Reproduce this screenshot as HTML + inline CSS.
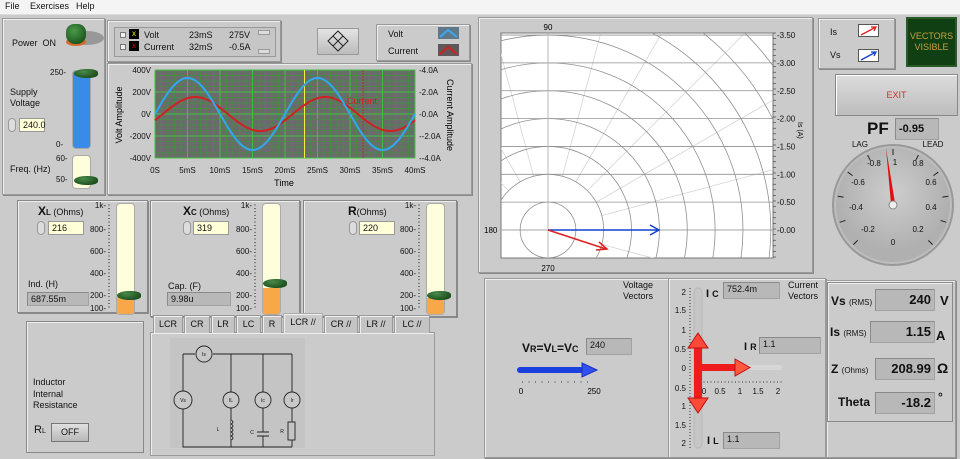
<!DOCTYPE html>
<html><head><meta charset="utf-8"><style>
*{box-sizing:border-box;margin:0;padding:0}
html,body{width:960px;height:459px;overflow:hidden}
body{background:#cbcbcb;font-family:"Liberation Sans",sans-serif;font-size:9px;color:#111;position:relative}
.a{position:absolute}
.menu{left:0;top:0;width:960px;height:15px;background:#f4f4f4;border-bottom:1px solid #ddd;font-size:9px}
.menu span{position:absolute;top:1px}
.pan{position:absolute;border:1px solid #9a9a9a;box-shadow:inset 1px 1px 0 #eee,1px 1px 0 #8a8a8a;background:#cbcbcb}
.box{position:absolute;background:#b8b8b8;border:1px solid #a2a2a2;border-top-color:#8a8a8a;border-left-color:#8a8a8a;padding:1px 3px;font-size:8px}
.inp{position:absolute;background:#ffffd8;border:1px solid #999;font-size:9px;padding:1px 3px;height:14px}
.spin{position:absolute;width:8px;height:14px;border-radius:4px;background:#ddd;border:1px solid #999}
.trk{position:absolute;border-radius:4px;background:#fefedc;border:1px solid #aaa;overflow:hidden}
.knob{position:absolute;width:24px;height:9px;border-radius:50% 40% 40% 50%;background:radial-gradient(ellipse at 40% 30%,#4a8a4a,#0c3a0c);}
.tab{position:absolute;top:315px;height:18px;background:#c4c4c4;border:1px solid #999;border-bottom:none;font-size:9px;text-align:center;line-height:16px;box-shadow:inset 1px 1px 0 #eee}
.b{font-weight:bold}
</style></head><body>
<div class="a menu"><span style="left:5px">File</span><span style="left:30px">Exercises</span><span style="left:76px">Help</span></div>

<div class="pan" style="left:2px;top:18px;width:103px;height:177px"></div>
<div class="a" style="left:12px;top:38px;font-size:9px">Power&nbsp; ON</div>
<div class="a" style="left:68px;top:31px;width:36px;height:14px;border-radius:50%;background:#777;opacity:.6"></div>
<div class="a" style="left:66px;top:38px;width:20px;height:8px;border-radius:50%;background:#d86a2a"></div>
<div class="a" style="left:66px;top:24px;width:20px;height:20px;border-radius:40% 40% 45% 45%;background:radial-gradient(circle at 40% 35%,#4a9a4a,#0d4010)"></div>
<div class="a" style="left:10px;top:87px;font-size:9px;line-height:11px">Supply<br>Voltage</div>
<div class="spin" style="left:8px;top:118px"></div>
<div class="inp" style="left:19px;top:118px;width:26px">240.0</div>
<div class="a" style="left:50px;top:68px;font-size:8px">250-</div>
<div class="a" style="left:56px;top:140px;font-size:8px">0-</div>
<div class="trk" style="left:72px;top:70px;width:19px;height:79px;background:#3a8ae8"></div>
<div class="knob" style="left:74px;top:69px"></div>
<div class="a" style="left:56px;top:154px;font-size:8px">60-</div>
<div class="a" style="left:56px;top:175px;font-size:8px">50-</div>
<div class="a" style="left:10px;top:164px;font-size:9px">Freq. (Hz)</div>
<div class="trk" style="left:72px;top:155px;width:19px;height:34px"></div>
<div class="knob" style="left:74px;top:176px"></div>

<div class="pan" style="left:107px;top:20px;width:174px;height:42px"></div>
<div class="a" style="left:114px;top:27px;width:162px;height:30px;border:1px solid #999;background:#c6c6c6"></div>
<div class="a" style="left:120px;top:32px;width:6px;height:6px;border:1px solid #777;background:#eee"></div>
<div class="a" style="left:120px;top:44px;width:6px;height:6px;border:1px solid #777;background:#eee"></div>
<div class="a" style="left:129px;top:29px;width:10px;height:10px;background:#000;color:#ee0;font-size:8px;text-align:center;line-height:10px">x</div>
<div class="a" style="left:129px;top:41px;width:10px;height:10px;background:#000;color:#d00;font-size:8px;text-align:center;line-height:10px">x</div>
<div class="a" style="left:144px;top:30px">Volt</div><div class="a" style="left:189px;top:30px">23mS</div><div class="a" style="left:229px;top:30px">275V</div>
<div class="a" style="left:144px;top:42px">Current</div><div class="a" style="left:189px;top:42px">32mS</div><div class="a" style="left:229px;top:42px">-0.5A</div>
<div class="a" style="left:258px;top:30px;width:12px;height:5px;background:#ddd;border:1px solid #999"></div>
<div class="a" style="left:258px;top:49px;width:12px;height:5px;background:#ddd;border:1px solid #999"></div>

<div class="a" style="left:317px;top:28px;width:42px;height:27px;background:linear-gradient(#e4e4e4,#bcbcbc);border:1px solid #999"></div>
<svg class="a" style="left:326px;top:29px" width="24" height="24"><g fill="none" stroke="#222"><path d="M12 2 L22 12 L12 22 L2 12Z"/><path d="M7 7 L17 17 M17 7 L7 17"/></g></svg>

<div class="pan" style="left:376px;top:24px;width:94px;height:37px"></div>
<div class="a" style="left:388px;top:29px">Volt</div><div class="a" style="left:388px;top:46px">Current</div>
<svg class="a" style="left:438px;top:27px" width="22" height="30"><rect x="0" y="0" width="21" height="12" fill="#607888"/><path d="M2 10 L10 3 L19 10" stroke="#3aa8f0" stroke-width="2" fill="none"/><rect x="0" y="17" width="21" height="12" fill="#605858"/><path d="M2 27 L10 20 L19 27" stroke="#d02020" stroke-width="2" fill="none"/></svg>

<div class="pan" style="left:107px;top:63px;width:365px;height:132px"></div>
<svg class="a" style="left:107px;top:63px" width="365" height="132">
<rect x="48" y="7" width="260" height="88" fill="#6b6b6b"/>
<g id="grid"></g>
<line x1="197.5" y1="7" x2="197.5" y2="95" stroke="#f0f040"/>
<line x1="256" y1="7" x2="256" y2="95" stroke="#b03030" stroke-dasharray="2,1"/>
<path id="iw" fill="none" stroke="#d02020" stroke-width="2"/>
<path id="vw" fill="none" stroke="#30a8f0" stroke-width="2"/>
<text x="240" y="41" fill="#d02020" font-size="9">Current</text>
<g font-size="8" fill="#111" text-anchor="end"><text x="44" y="10">400V</text><text x="44" y="32">200V</text><text x="44" y="54">0V</text><text x="44" y="76">-200V</text><text x="44" y="98">-400V</text></g>
<g font-size="8" fill="#111"><text x="312" y="10">-4.0A</text><text x="312" y="32">-2.0A</text><text x="312" y="54">-0.0A</text><text x="312" y="76">--2.0A</text><text x="312" y="98">--4.0A</text></g>
<g font-size="8" fill="#111" text-anchor="middle" id="xl"></g>
<text x="177" y="123" font-size="9" text-anchor="middle">Time</text>
<text transform="translate(15,52) rotate(-90)" font-size="9" text-anchor="middle">Volt Amplitude</text>
<text transform="translate(340,52) rotate(90)" font-size="9" text-anchor="middle">Current Amplitude</text>
</svg>

<div class="pan" style="left:478px;top:17px;width:335px;height:256px"></div>
<svg class="a" style="left:478px;top:17px" width="335" height="256">
<defs><clipPath id="pc"><rect x="23" y="16" width="272" height="225"/></clipPath></defs>
<rect x="23" y="16" width="272" height="225" fill="#fff" stroke="#777"/>
<g clip-path="url(#pc)" fill="none" stroke="#a0a0a0" stroke-width="0.8" id="polar"></g>
<line x1="70" y1="213" x2="180" y2="213" stroke="#1040d0" stroke-width="1.5"/>
<path d="M172 208 L181 213 L172 218" stroke="#1040d0" stroke-width="1.5" fill="none"/>
<line x1="70" y1="213" x2="128" y2="232" stroke="#e02020" stroke-width="1.5"/>
<path d="M118 233 L129 232 L121 225" stroke="#e02020" stroke-width="1.5" fill="none"/>
<g font-size="8" fill="#111" id="pl"></g>
<text x="70" y="13" font-size="8" text-anchor="middle">90</text>
<text x="70" y="254" font-size="8" text-anchor="middle">270</text>
<text x="6" y="216" font-size="8">180</text>
<text transform="translate(320,105) rotate(90)" font-size="7">Is (A)</text>
</svg>

<div class="pan" style="left:818px;top:18px;width:77px;height:51px"></div>
<div class="a" style="left:830px;top:27px">Is</div><div class="a" style="left:830px;top:50px">Vs</div>
<svg class="a" style="left:858px;top:24px" width="22" height="40"><rect x="0.5" y="0.5" width="20" height="12" fill="#fff" stroke="#555"/><path d="M3 11 L18 3 M13 3 L18 3 L16 7" stroke="#e02020" stroke-width="1.3" fill="none"/><rect x="0.5" y="25.5" width="20" height="12" fill="#fff" stroke="#555"/><path d="M3 36 L18 28 M13 28 L18 28 L16 32" stroke="#1040d0" stroke-width="1.3" fill="none"/></svg>
<div class="a" style="left:906px;top:17px;width:51px;height:50px;background:#0f3f12;border:2px solid #2a5a2a;color:#c8a040;font-size:9px;text-align:center;padding-top:12px;line-height:11px">VECTORS<br>VISIBLE</div>
<div class="a" style="left:835px;top:74px;width:123px;height:42px;background:linear-gradient(#dcdcdc,#bdbdbd);border:1px solid #888;box-shadow:inset 1px 1px 0 #fff;color:#d03030;text-align:center;line-height:40px;font-size:9px">EXIT</div>
<div class="a b" style="left:867px;top:119px;font-size:17px">PF</div>
<div class="box" style="left:895px;top:118px;width:44px;height:22px;font-size:11px;font-weight:bold;line-height:18px">-0.95</div>
<svg class="a" style="left:828px;top:140px" width="130" height="128">
<defs><radialGradient id="gg" cx="50%" cy="40%"><stop offset="0" stop-color="#cdcdcd"/><stop offset="1" stop-color="#b0b0b0"/></radialGradient></defs>
<circle cx="65" cy="65" r="60" fill="#bdbdbd" stroke="#999" stroke-width="2"/>
<circle cx="65" cy="65" r="57" fill="url(#gg)"/>
<g stroke="#222" stroke-width="1" id="tk"></g>
<g font-size="8" fill="#111" text-anchor="middle"><text x="67" y="25">1</text><text x="46" y="26">-0.8</text><text x="90" y="26">0.8</text><text x="30" y="45">-0.6</text><text x="103" y="45">0.6</text><text x="28" y="70">-0.4</text><text x="103" y="70">0.4</text><text x="40" y="92">-0.2</text><text x="90" y="92">0.2</text><text x="65" y="105">0</text><text x="32" y="7">LAG</text><text x="105" y="7">LEAD</text></g>
<path d="M58 8 L67 63 L63 64 Z" fill="#e01010"/>
<circle cx="65" cy="65" r="4" fill="#eee" stroke="#888"/>
</svg>

<div class="pan" style="left:17px;top:200px;width:131px;height:113px;border-color:#888"></div>
<div class="pan" style="left:150px;top:200px;width:150px;height:117px;border-color:#888"></div>
<div class="pan" style="left:303px;top:200px;width:154px;height:117px;border-color:#888"></div>
<div class="a" style="left:38px;top:204px;font-size:9px"><b style="font-size:12px">X</b><b style="font-size:8px">L</b> (Ohms)</div>
<div class="spin" style="left:37px;top:221px"></div><div class="inp" style="left:48px;top:221px;width:36px">216</div>
<div class="a" style="left:28px;top:279px">Ind. (H)</div>
<div class="box" style="left:27px;top:292px;width:62px;height:14px;font-size:9px">687.55m</div>
<div class="a" style="left:183px;top:204px;font-size:9px"><b style="font-size:12px">X</b><b style="font-size:8px">C</b> (Ohms)</div>
<div class="spin" style="left:183px;top:221px"></div><div class="inp" style="left:193px;top:221px;width:36px">319</div>
<div class="a" style="left:168px;top:281px">Cap. (F)</div>
<div class="box" style="left:167px;top:292px;width:64px;height:14px;font-size:9px">9.98u</div>
<div class="a" style="left:348px;top:204px;font-size:9px"><b style="font-size:12px">R</b>(Ohms)</div>
<div class="spin" style="left:349px;top:221px"></div><div class="inp" style="left:359px;top:221px;width:36px">220</div>
<svg class="a" style="left:0;top:195px" width="480" height="125"><g font-size="8" fill="#111" text-anchor="end" id="sc"></g></svg>
<div class="trk" style="left:116px;top:203px;width:19px;height:112px"><div style="position:absolute;left:0;bottom:0;width:19px;height:17px;background:#f8a848"></div></div>
<div class="knob" style="left:117px;top:291px"></div>
<div class="trk" style="left:262px;top:203px;width:19px;height:112px"><div style="position:absolute;left:0;bottom:0;width:19px;height:26px;background:#f8a848"></div></div>
<div class="knob" style="left:263px;top:279px"></div>
<div class="trk" style="left:426px;top:203px;width:19px;height:112px"><div style="position:absolute;left:0;bottom:0;width:19px;height:16px;background:#f8a848"></div></div>
<div class="knob" style="left:427px;top:291px"></div>

<div class="a" style="left:26px;top:321px;width:118px;height:132px;border:1px solid #888;box-shadow:inset 1px 1px 0 #eee"></div>
<div class="a" style="left:33px;top:377px;line-height:11.5px">Inductor<br>Internal<br>Resistance</div>
<div class="a" style="left:34px;top:424px;font-size:11px">R<span style="font-size:7px">L</span></div>
<div class="a" style="left:51px;top:423px;width:38px;height:19px;background:linear-gradient(#e0e0e0,#b8b8b8);border:1px solid #777;text-align:center;line-height:17px">OFF</div>

<div class="a" style="left:150px;top:332px;width:285px;height:124px;border:1px solid #999;background:#cbcbcb;box-shadow:inset 1px 1px 0 #eee"></div>
<div class="tab" style="left:153px;width:30px">LCR</div>
<div class="tab" style="left:184px;width:26px">CR</div>
<div class="tab" style="left:211px;width:24px">LR</div>
<div class="tab" style="left:236px;width:25px">LC</div>
<div class="tab" style="left:262px;width:20px">R</div>
<div class="tab" style="left:283px;width:40px;top:313px;height:20px;background:#cbcbcb;border-color:#aaa">LCR //</div>
<div class="tab" style="left:324px;width:34px">CR //</div>
<div class="tab" style="left:359px;width:34px">LR //</div>
<div class="tab" style="left:394px;width:36px">LC //</div>
<svg class="a" style="left:170px;top:338px" width="135" height="110"><rect x="0" y="0" width="135" height="110" fill="#c4c4c4"/>
<g stroke="#222" fill="#c8c8c8" stroke-width="0.9">
<path d="M13 16 L25 16 M43 16 L122 16 M13 16 L13 109 L122 109 M61 16 L61 109 M93 16 L93 109 M122 16 L122 109" fill="none"/>
<circle cx="34" cy="16" r="8"/><circle cx="13" cy="62" r="9"/><circle cx="61" cy="62" r="8"/><circle cx="93" cy="62" r="8"/><circle cx="122" cy="62" r="8"/>
<path d="M61 82 q4 2 0 4 q4 2 0 4 q4 2 0 4 q4 2 0 4 q4 2 0 4" fill="#c4c4c4"/>
<path d="M87 94 L99 94 M87 98 L99 98" fill="none"/><rect x="91" y="94.5" width="4" height="3" stroke="none" fill="#c4c4c4"/>
<rect x="118" y="84" width="7" height="18" fill="#c4c4c4"/>
</g>
<g font-size="5" text-anchor="middle" fill="#111"><text x="34" y="18">Is</text><text x="13" y="64">Vs</text><text x="61" y="64">IL</text><text x="93" y="64">Ic</text><text x="122" y="64">Ir</text><text x="48" y="93">L</text><text x="82" y="96">C</text><text x="112" y="95">R</text></g>
</svg>

<div class="pan" style="left:484px;top:278px;width:186px;height:180px"></div>
<div class="pan" style="left:668px;top:278px;width:158px;height:180px"></div>
<div class="pan" style="left:826px;top:280px;width:130px;height:178px"></div>
<div class="a" style="left:623px;top:280px;text-align:right;line-height:11px">Voltage<br>Vectors</div>
<div class="a b" style="left:522px;top:341px;font-size:12px">V<span style="font-size:9px">R</span>=V<span style="font-size:9px">L</span>=V<span style="font-size:9px">C</span></div>
<div class="box" style="left:586px;top:338px;width:46px;height:17px;font-size:9px">240</div>
<svg class="a" style="left:515px;top:360px" width="90" height="35"><path d="M5 10 L67 10" stroke="#1a40e0" stroke-width="6" stroke-linecap="round"/><path d="M67 3 L82 10 L67 17 Z" fill="#3050f0" stroke="#1a30c0"/><path d="M7 22 H78" stroke="#333" stroke-dasharray="1,5.5"/><text x="6" y="34" font-size="8" text-anchor="middle">0</text><text x="79" y="34" font-size="8" text-anchor="middle">250</text></svg>

<div class="a" style="left:788px;top:280px;text-align:right;line-height:11px">Current<br>Vectors</div>
<svg class="a" style="left:670px;top:283px" width="140" height="170">
<rect x="24" y="5" width="8" height="160" rx="4" fill="#c6c6c6" stroke="#b8b8b8"/>
<rect x="28" y="82" width="84" height="5" rx="2" fill="#d6d6d6"/>
<g font-size="8" fill="#111" text-anchor="end"><text x="16" y="12">2</text><text x="16" y="30">1.5</text><text x="16" y="50">1</text><text x="16" y="69">0.5</text><text x="16" y="88">0</text><text x="16" y="108">0.5</text><text x="16" y="126">1</text><text x="16" y="145">1.5</text><text x="16" y="163">2</text></g>
<path d="M20 5 V165" stroke="#333" stroke-dasharray="1,2"/>
<path d="M30 99 H112" stroke="#333" stroke-dasharray="1,2.5"/>
<g font-size="8" fill="#111" text-anchor="middle"><text x="34" y="111">0</text><text x="50" y="111">0.5</text><text x="70" y="111">1</text><text x="88" y="111">1.5</text><text x="108" y="111">2</text></g>
<rect x="24" y="60" width="8" height="62" fill="#ee1c1c"/>
<path d="M18 65 L28 50 L38 65 Z M18 115 L28 130 L38 115 Z" fill="#ff4a3a" stroke="#c01010"/>
<rect x="28" y="81" width="38" height="7" fill="#ee1c1c"/>
<path d="M65 76 L80 84.5 L65 93 Z" fill="#ff5a40" stroke="#c01010"/>
</svg>
<div class="a b" style="left:706px;top:288px;font-size:11px">I <span style="font-size:9px">C</span></div>
<div class="box" style="left:723px;top:282px;width:57px;height:17px;font-size:9px">752.4m</div>
<div class="a b" style="left:744px;top:341px;font-size:11px">I <span style="font-size:9px">R</span></div>
<div class="box" style="left:759px;top:337px;width:62px;height:17px;font-size:9px">1.1</div>
<div class="a b" style="left:707px;top:435px;font-size:11px">I <span style="font-size:9px">L</span></div>
<div class="box" style="left:723px;top:432px;width:57px;height:17px;font-size:9px">1.1</div>

<div class="a" style="left:827px;top:282px;width:126px;height:140px;border:1px solid #888;box-shadow:inset 1px 1px 0 #eee"></div>
<div class="a b" style="left:831px;top:294px;font-size:12px">Vs <span style="font-weight:normal;font-size:8px">(RMS)</span></div>
<div class="box" style="left:875px;top:289px;width:60px;height:22px;font-size:13px;font-weight:bold;text-align:right;line-height:18px">240</div>
<div class="a b" style="left:940px;top:293px;font-size:13px">V</div>
<div class="a b" style="left:830px;top:325px;font-size:12px">Is <span style="font-weight:normal;font-size:8px">(RMS)</span></div>
<div class="box" style="left:870px;top:321px;width:65px;height:22px;font-size:13px;font-weight:bold;text-align:right;line-height:18px">1.15</div>
<div class="a b" style="left:936px;top:328px;font-size:13px">A</div>
<div class="a b" style="left:831px;top:362px;font-size:12px">Z <span style="font-weight:normal;font-size:8px">(Ohms)</span></div>
<div class="box" style="left:875px;top:358px;width:60px;height:22px;font-size:13px;font-weight:bold;text-align:right;line-height:18px">208.99</div>
<div class="a b" style="left:937px;top:360px;font-size:14px">Ω</div>
<div class="a b" style="left:838px;top:395px;font-size:12px">Theta</div>
<div class="box" style="left:875px;top:392px;width:60px;height:22px;font-size:13px;font-weight:bold;text-align:right;line-height:18px">-18.2</div>
<div class="a b" style="left:938px;top:390px;font-size:12px">°</div>

<script>
var NS="http://www.w3.org/2000/svg";
function el(p,t,a,tx){var e=document.createElementNS(NS,t);for(var k in a)e.setAttribute(k,a[k]);if(tx)e.textContent=tx;p.appendChild(e);return e;}
var g=document.getElementById("grid");
for(var i=0;i<=40;i++){var x=48+i*6.5;el(g,"line",{x1:x,y1:7,x2:x,y2:95,stroke:i%5==0?"#40c040":"#30a030","stroke-width":i%5==0?1:0.5});}
for(var j=0;j<=16;j++){var y=7+j*5.5;el(g,"line",{x1:48,y1:y,x2:308,y2:y,stroke:j%4==0?"#40c040":"#30a030","stroke-width":j%4==0?1:0.5});}
var v="",c="";
for(var t=0;t<=40;t+=0.25){var x=48+t*6.5;var yv=51-36*Math.sin(2*Math.PI*t/20);var yc=51-17*Math.sin(2*Math.PI*(t-1.2)/20);v+=(t?"L":"M")+x.toFixed(1)+" "+yv.toFixed(1);c+=(t?"L":"M")+x.toFixed(1)+" "+yc.toFixed(1);}
document.getElementById("vw").setAttribute("d",v);document.getElementById("iw").setAttribute("d",c);
var xl=document.getElementById("xl");["0S","5mS","10mS","15mS","20mS","25mS","30mS","35mS","40mS"].forEach(function(s,i){el(xl,"text",{x:48+i*32.5,y:110},s);});
var p=document.getElementById("polar"),ox=70,oy=213,u=55.7;
for(var a=0;a<360;a+=15){var inner=a%90==0?0:u*1;el(p,"line",{x1:ox+inner*Math.cos(a*Math.PI/180),y1:oy-inner*Math.sin(a*Math.PI/180),x2:ox+400*Math.cos(a*Math.PI/180),y2:oy-400*Math.sin(a*Math.PI/180),stroke:"#d4d4d4"});}
for(var r=0.5;r<=6;r+=0.5)el(p,"circle",{cx:ox,cy:oy,r:r*u,stroke:"#909090"});
for(var r=0.5;r<=3.5;r+=0.5)el(p,"line",{x1:23,y1:oy-r*u,x2:295,y2:oy-r*u,stroke:"#909090"});
el(p,"line",{x1:23,y1:oy,x2:295,y2:oy,stroke:"#909090"});
el(p,"line",{x1:ox,y1:16,x2:ox,y2:241,stroke:"#b0b0b0"});
var pl=document.getElementById("pl");
for(var r=0;r<=3.5;r+=0.5){el(pl,"text",{x:299,y:oy-r*u+3},"-"+r.toFixed(2));}
for(var y=16;y<241;y+=5.6)el(pl,"line",{x1:295,y1:y,x2:298,y2:y,stroke:"#333","stroke-width":0.6});
var tk=document.getElementById("tk");
for(var k=0;k<=10;k++){var ang=(-135+k*27)*Math.PI/180;el(tk,"line",{x1:65+50*Math.sin(ang),y1:65-50*Math.cos(ang),x2:65+56*Math.sin(ang),y2:65-56*Math.cos(ang)});}
var sc=document.getElementById("sc");
[112,258,422].forEach(function(x){[["1k",10],["800",34],["600",56],["400",78],["200",100],["100",113]].forEach(function(l){el(sc,"text",{x:x-6,y:l[1]+3},l[0]+"-");});
for(var y=10;y<=113;y+=3.4)el(sc,"line",{x1:x-4,y1:y,x2:x-2,y2:y,stroke:"#333","stroke-width":0.6});});
</script>
</body></html>
